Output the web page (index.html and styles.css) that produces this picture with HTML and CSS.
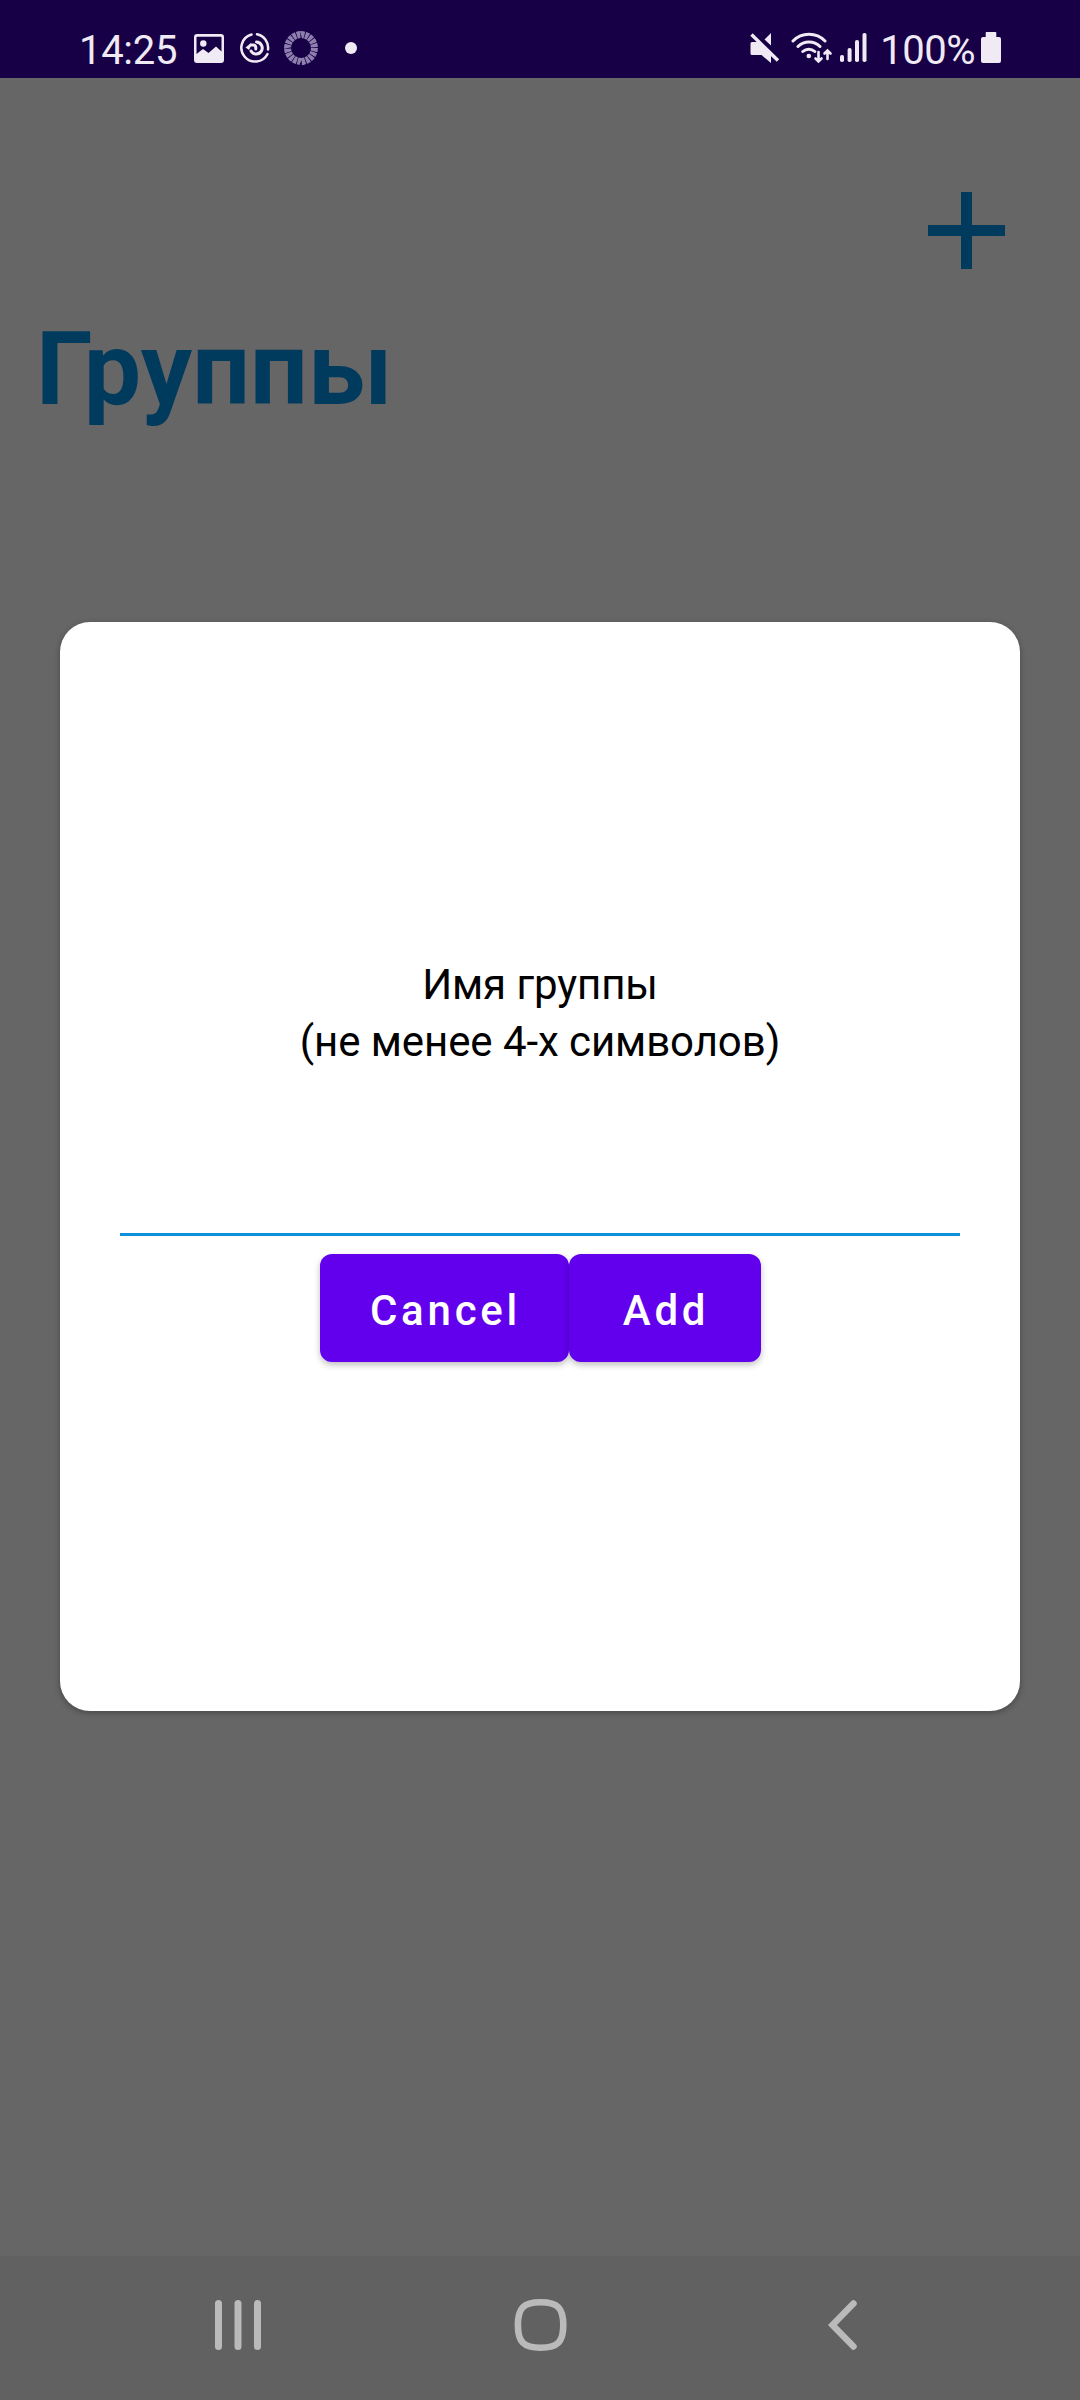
FILE: index.html
```
<!DOCTYPE html>
<html lang="ru">
<head>
<meta charset="utf-8">
<title>Группы</title>
<link rel="stylesheet" href="styles.css">
</head>
<body>
<div class="screen">
  <header class="status">
    <div class="status-left">
      <span class="time">14:25</span>
      <svg class="i-image" width="30" height="29" viewBox="0 0 30 29"><path fill-rule="evenodd" d="M3 0h24a3 3 0 0 1 3 3v23a3 3 0 0 1-3 3H3a3 3 0 0 1-3-3V3a3 3 0 0 1 3-3zM2.500 3.500V20L9 15l5.500 4L22 12.500l5.500 5V3.500a.8.8 0 0 0-.8-.8H3.300a.8.8 0 0 0-.8.8z"/><circle cx="9.300" cy="9.500" r="3.200"/></svg>
      <svg class="i-sync line" width="32" height="32" viewBox="0 0 32 32"><path d="M12.500 2.500A13.800 13.800 0 1 0 28.500 22M18 2.200A13.800 13.800 0 0 1 29 17.500" stroke-width="2.500"/><path d="M17.500 10a6 6 0 1 1-5.500 9" stroke-width="3"/><path d="M16.800 17v-1.500a2.800 2.800 0 0 0-2.800-2.500h-2" stroke-width="3"/><path class="solid" d="M6.500 15.500l5.500-4.500v3l-2 4z"/></svg>
      <svg class="i-ring" width="34" height="34" viewBox="0 0 34 34"><circle cx="17" cy="17" r="13.400" pathLength="100" stroke-dasharray="4.100 .9"/></svg>
      <svg class="i-dot" width="12" height="12" viewBox="0 0 12 12"><circle cx="6" cy="6" r="6"/></svg>
    </div>
    <div class="status-right">
      <svg class="i-mute" width="30" height="32" viewBox="0 0 30 32"><path d="M21 1v12.500l-6.500-6zM2 10h7.500L21 21.500V31l-9.500-8H2a1.500 1.500 0 0 1-1.500-1.500v-10A1.500 1.500 0 0 1 2 10z"/><path class="stroke" d="M1.500 2.500L28 28.500"/></svg>
      <svg class="i-wifi line" width="42" height="32" viewBox="0 0 42 32"><path d="M2 9a22.500 22.500 0 0 1 32 0M7 14.500a15.500 15.500 0 0 1 22 0M11.800 19.500a9 9 0 0 1 12 0" stroke-width="3"/><circle class="solid" cx="17.800" cy="24" r="2.300"/><path d="M27.500 20v9M24.500 26.500l3 3 3-3M36.500 27v-8M33.500 21.500l3-3 3 3" stroke-width="2.600"/></svg>
      <svg class="i-signal" width="27" height="30" viewBox="0 0 27 30"><rect x="0" y="22" width="4" height="7" rx="1.800"/><rect x="7.600" y="15" width="4" height="14" rx="1.800"/><rect x="15" y="7" width="4" height="22" rx="1.800"/><rect x="22.500" y="0" width="4" height="29" rx="1.800"/></svg>
      <span class="percent">100%</span>
      <svg class="i-battery" width="20" height="32" viewBox="0 0 20 32"><path d="M5.500 0h9a.8.8 0 0 1 .8.800V5H18a2 2 0 0 1 2 2v22a2 2 0 0 1-2 2H2a2 2 0 0 1-2-2V7a2 2 0 0 1 2-2h2.700V.8a.8.8 0 0 1 .8-.8z"/></svg>
    </div>
  </header>
  <main class="page">
    <svg class="plus" width="77" height="77" viewBox="0 0 77 77"><path d="M33 0h11v33h33v11H44v33H33V44H0V33h33z"/></svg>
    <h1 class="title">Группы</h1>
  </main>
  <nav class="nav">
    <svg width="60" height="60" viewBox="0 0 60 60"><path d="M10.500 8.500v43M30 8.500v43M49.500 8.500v43" stroke-width="7"/></svg>
    <svg width="60" height="60" viewBox="0 0 60 60"><path d="M29.600 7.300c17 0 22.700 5.700 22.700 22.700s-5.700 22.700-22.700 22.700S6.900 47 6.900 30s5.700-22.700 22.700-22.700z" stroke-width="6.600"/></svg>
    <svg width="60" height="60" viewBox="0 0 60 60"><path class="miter" d="M40.500 8.500L19.500 30l21 21.500" stroke-width="6.500"/></svg>
  </nav>
  <div class="overlay">
    <section class="dialog">
      <p class="label">Имя группы<br>(не менее 4-х символов)</p>
      <div class="field"></div>
      <div class="actions"><button class="btn">Cancel</button><button class="btn">Add</button></div>
    </section>
  </div>
</div>
</body>
</html>
```
FILE: styles.css
```
* { box-sizing: border-box; }
body { margin: 0; font-family: Roboto, "Noto Sans", sans-serif; }
svg { display: block; flex: none; }

.screen {
  position: relative;
  width: 1080px;
  height: 2400px;
  display: flex;
  flex-direction: column;
  background: #666;
}

/* Status bar */
.status {
  height: 78px;
  padding: 18px 79px 0;
  display: flex;
  justify-content: space-between;
  background: #180047;
  color: #efeaf4;
  font-size: 40px;
  line-height: 60px;
}
.status svg { fill: #efeaf4; }
.status .line { fill: none; stroke: #efeaf4; stroke-linecap: round; }
.status .solid { fill: #efeaf4; stroke: none; }
.status-left, .status-right { display: flex; align-items: center; }
.time { padding-top: 5px; letter-spacing: -0.3px; }
.i-image { margin-left: 17px; }
.i-sync { margin-left: 15px; }
.status .i-ring { margin-left: 13px; fill: none; stroke: #8f7fae; stroke-width: 7; }
.i-dot { margin-left: 27px; }
.i-mute .stroke { fill: none; stroke: #efeaf4; stroke-width: 3.4; }
.i-wifi { margin-left: 11px; }
.i-signal { margin-left: 7px; }
.percent { margin-left: 13px; padding-top: 5px; letter-spacing: -0.5px; }
.i-battery { margin-left: 6px; }

/* Page */
.page { flex: 1; display: flex; flex-direction: column; padding: 114px 36px 0; }
.plus { align-self: flex-end; margin-right: 39px; fill: #003a5d; }
.title { margin: 40px 0 0; font-size: 102px; line-height: 120px; font-weight: 700; letter-spacing: 0.1px; color: #003a5d; }

/* System navigation */
.nav {
  height: 144px;
  padding: 0 207px 6px 208px;
  display: flex;
  align-items: center;
  justify-content: space-between;
  background: #616161;
}
.nav svg { fill: none; stroke: #bababa; stroke-linecap: round; }
.nav .miter { stroke-linejoin: miter; }

/* Dialog */
.overlay { position: absolute; inset: 0; padding: 622px 60px 0; }
.dialog {
  height: 1089px;
  padding: 334px 60px 0;
  display: flex;
  flex-direction: column;
  border-radius: 30px;
  background: #fff;
  box-shadow: 0 2px 6px rgba(0, 0, 0, .3);
}
.label { margin: 0; text-align: center; font-size: 42px; line-height: 57px; letter-spacing: -0.08px; color: #000; }
.field { height: 166px; border-bottom: 3px solid #1090dc; }
.actions { display: flex; justify-content: center; margin-top: 18px; padding-left: 1px; }
.btn {
  height: 108px;
  min-width: 192px;
  padding: 4px 48px 0 50px;
  border: 0;
  border-radius: 12px;
  background: #6200ee;
  color: #fff;
  font: 500 42px Roboto, sans-serif;
  letter-spacing: 3.75px;
  box-shadow: 0 3px 6px rgba(0, 0, 0, .25);
}
```
